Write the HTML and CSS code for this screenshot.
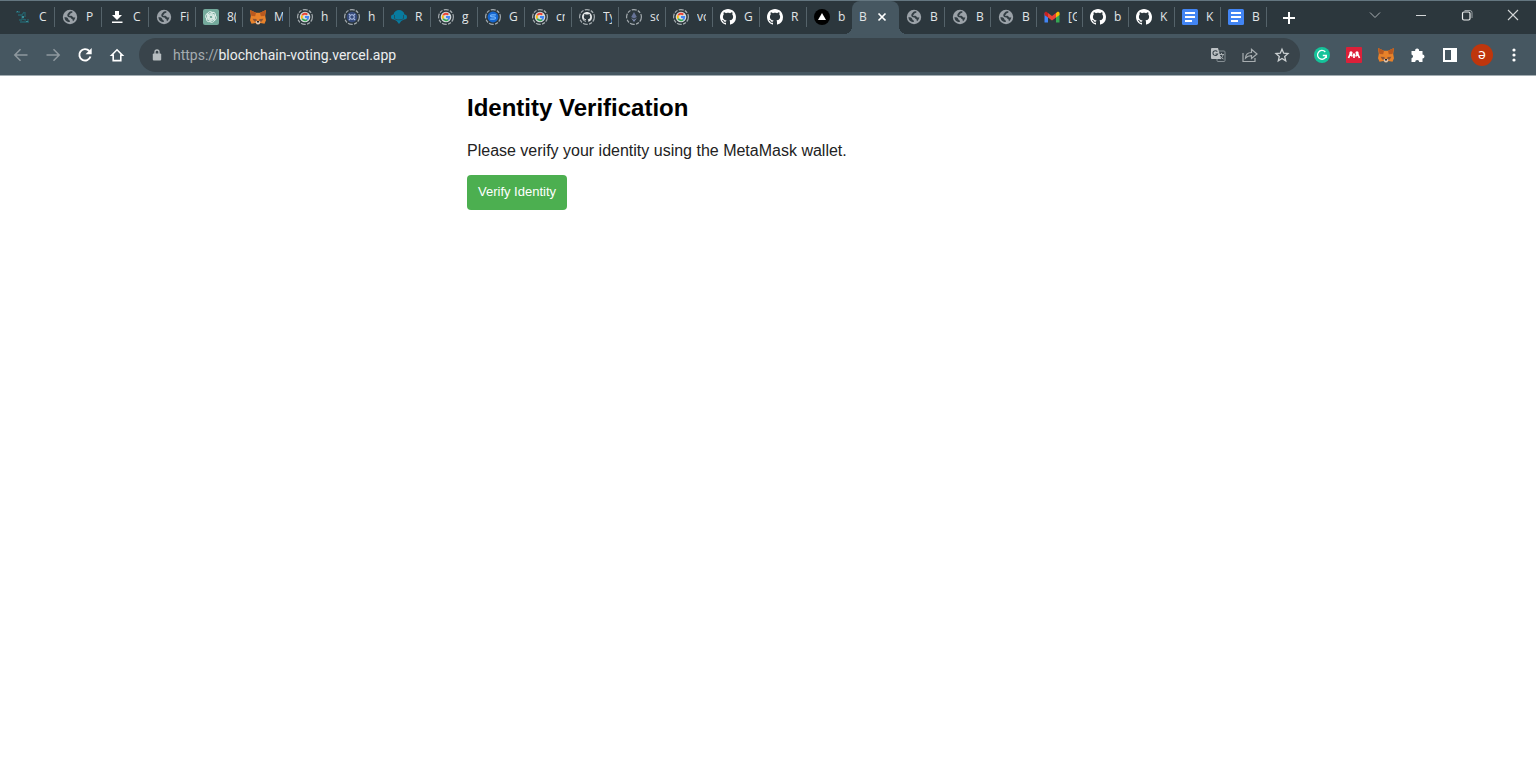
FILE: index.html
```html
<!DOCTYPE html>
<html lang="en">
<head>
<meta charset="utf-8">
<meta name="viewport" content="width=device-width, initial-scale=1">
<title>Identity Verification</title>
<link rel="stylesheet" href="styles.css">
</head>
<body>
<svg class="sprite" aria-hidden="true">
  <symbol id="globe" viewBox="0 0 16 16"><circle cx="8" cy="8" r="7.200" fill="#9ba2a8"/><path d="M2.500 8c1 .2 2.300 .2 3.200 1 .8.800.5 1.900 1.500 2.200 1 .3.800 1 .5 1.900C4.800 13 2.300 11 2.500 8zM7 3.200c1-1 2.500-1 3.600-.5-.2 1-.8 1.300-1.800 1.600-.7.3-.5 1.200-1.300 1.400-.8.300-.3 1.300.5 1.200 1.200-.2 2.200 0 2.600.9.400.9 1.500.600 2.700.400-.3 1.800-1 3-2.300 4-.5-.8-.2-1.900-1-2.200-1.200-.3-.6-1.500-1.900-1.600C6.500 8.200 5 7.400 5.300 6c.2-1.200 1-1.700 1.700-2.800z" fill="#333e44"/></symbol>
  <symbol id="github" viewBox="0 0 16 16"><path fill="currentColor" d="M8 0C3.580 0 0 3.580 0 8c0 3.540 2.290 6.530 5.470 7.590.4.070.55-.17.55-.38 0-.19-.01-.82-.01-1.490-2.010.37-2.530-.49-2.690-.94-.09-.23-.48-.94-.82-1.130-.28-.15-.68-.52-.01-.53.63-.01 1.080.58 1.230.82.720 1.210 1.870.87 2.330.66.070-.52.280-.87.510-1.070-1.780-.2-3.640-.89-3.640-3.950 0-.87.310-1.590.820-2.150-.08-.2-.36-1.020.08-2.120 0 0 .67-.21 2.200.820.640-.18 1.320-.27 2-.27s1.360.09 2 .27c1.530-1.040 2.200-.82 2.200-.82.440 1.100.160 1.920.080 2.120.51.560.820 1.270.820 2.150 0 3.070-1.870 3.750-3.650 3.950.29.250.540.730.540 1.480 0 1.070-.01 1.930-.01 2.200 0 .21.150.460.550.38A8.010 8.010 0 0 0 16 8c0-4.420-3.580-8-8-8z"/></symbol>
  <symbol id="ring" viewBox="0 0 16 16"><circle cx="8" cy="8" r="7.400" fill="none" stroke="#a3aaae" stroke-width="1.200" stroke-dasharray="5 1.200 3.200 1.400"/></symbol>
  <symbol id="google" viewBox="0 0 16 16"><use href="#ring"/><circle cx="8" cy="8" r="5.300" fill="#d5d9da"/><g fill="none" stroke-width="1.800"><path d="M5.200 6.400A3.200 3.200 0 0 1 10.300 5.700" stroke="#ea4335"/><path d="M5.200 6.400a3.200 3.200 0 0 0 0 3.200" stroke="#fbbc05"/><path d="M5.200 9.600a3.200 3.200 0 0 0 4.800 1" stroke="#34a853"/><path d="M8 8h3.200c0 1.200-.5 2.100-1.200 2.600" stroke="#4285f4"/></g></symbol>
  <symbol id="fox" viewBox="0 0 16 16"><path d="M0 1l6 2.800h4L16 1l-.8 6 .8 4.200-1.500 3.600-4-.9-1.300 1.300H6.800L5.500 13.900l-4 .9L0 11.200.8 7z" fill="#e8822a"/><path d="M0 1l6 2.800-.8 3.400L1.500 7zM16 1l-6 2.800.8 3.400L14.500 7z" fill="#b9591f"/><path d="M2.500 9.800l4 .1.300 3-2.500-.4zM13.500 9.800l-4 .1-.3 3 2.500-.4z" fill="#8d5636"/><path d="M5.500 12.700l1.300-.6h2.400l1.300.6-1.300 2.500H6.800z" fill="#d9c9bd"/><path d="M7 12h2v1.600H7z" fill="#2a2522"/></symbol>
  <symbol id="docs" viewBox="0 0 16 16"><rect width="16" height="16" rx="1.500" fill="#4285f4"/><path d="M3 4h10M3 8h10M3 12h7" stroke="#fff" stroke-width="1.800"/></symbol>
</svg>

<header class="browser">
  <div class="strip">
    <nav class="tabs" aria-label="Open tabs">
      <button class="tab"><svg viewBox="0 0 16 16"><path d="M1 3h4M3 6h4l2-3M7 6v4l4 1M10 3v5M4 11h3M5 13h9M13 10v3" fill="none" stroke="#24616b" stroke-width="1.300"/><path d="M7 7h2v2H7zM2 2h1v1H2zM11 12h2v1h-2z" fill="#3a8c96"/></svg><span>C</span></button>
      <button class="tab"><svg><use href="#globe"/></svg><span>P</span></button>
      <button class="tab"><svg viewBox="0 0 16 16"><path d="M6 2h4v4h3l-5 5-5-5h3zM3 12.500h10.500V14H3z" fill="#fff"/></svg><span>C</span></button>
      <button class="tab"><svg><use href="#globe"/></svg><span>Fi</span></button>
      <button class="tab"><svg viewBox="0 0 16 16"><rect width="16" height="16" rx="2" fill="#74aa9c"/><g fill="none" stroke="#e4f1ed" stroke-width=".9"><path id="petal" d="M4.500 8.800V5.300a2.800 2.800 0 0 1 5-1.600M6.300 9V6l3-1.700"/><use href="#petal" transform="rotate(60 8 8)"/><use href="#petal" transform="rotate(120 8 8)"/><use href="#petal" transform="rotate(180 8 8)"/><use href="#petal" transform="rotate(240 8 8)"/><use href="#petal" transform="rotate(300 8 8)"/></g></svg><span>8(</span></button>
      <button class="tab"><svg><use href="#fox"/></svg><span>M</span></button>
      <button class="tab"><svg><use href="#google"/></svg><span>h</span></button>
      <button class="tab"><svg viewBox="0 0 16 16"><use href="#ring"/><circle cx="8" cy="8" r="5.300" fill="#354a7b"/><path d="M4.800 4.800l6.400 6.400M11.200 4.800l-6.400 6.400" stroke="#a9bce7" stroke-width="1.100"/><circle cx="8" cy="8" r="2.300" fill="#354a7b" stroke="#b9c9ec"/></svg><span>h</span></button>
      <button class="tab"><svg viewBox="0 0 16 16"><path d="M2.500 5.500C3 2.500 5.500 1 8 1s5 1.500 5.500 4.500c1.500 0 2.500.8 2.500 2.500s-1 2.500-3 2.500L10.300 12 8 15l-2.300-3L3 10.500C1 10.500 0 9.700 0 8s1-2.500 2.500-2.500z" fill="#087b9f"/><path d="M3.500 6v3.500c1 1.500 7 2 9 0V6" fill="none" stroke="#2b4652" stroke-width=".8"/></svg><span>R</span></button>
      <button class="tab"><svg><use href="#google"/></svg><span>g</span></button>
      <button class="tab"><svg viewBox="0 0 16 16"><use href="#ring"/><circle cx="8" cy="8" r="5.400" fill="#1566cf"/><path d="M10.800 5.800H7c-2 0-2 2 0 2.100h2c2 .1 2 2.300 0 2.300H5.200" fill="none" stroke="#72b6ff" stroke-width="1.200"/></svg><span>G</span></button>
      <button class="tab"><svg><use href="#google"/></svg><span>cr</span></button>
      <button class="tab"><svg viewBox="0 0 16 16"><use href="#ring"/><use href="#github" x="3" y="3" width="10" height="10" color="#e4e7e8"/></svg><span>Ty</span></button>
      <button class="tab"><svg viewBox="0 0 16 16"><use href="#ring"/><path d="M8 3l2.800 4.900L8 9.600 5.200 7.900z" fill="#667397"/><path d="M5.200 9L8 10.700 10.800 9 8 13z" fill="#8490b4"/></svg><span>so</span></button>
      <button class="tab"><svg><use href="#google"/></svg><span>vo</span></button>
      <button class="tab"><svg><use href="#github"/></svg><span>G</span></button>
      <button class="tab"><svg><use href="#github"/></svg><span>R</span></button>
      <button class="tab tab-before"><svg viewBox="0 0 16 16"><circle cx="8" cy="8" r="8" fill="#000"/><path d="M8 4l4 7H4z" fill="#fff"/></svg><span>b</span></button>
      <button class="tab tab-active" aria-current="page"><span>B</span><svg viewBox="0 0 16 16"><path d="M4.500 4.500l7 7M11.500 4.500l-7 7" stroke="#fff" stroke-width="1.700"/></svg></button>
      <button class="tab tab-small"><svg><use href="#globe"/></svg><span>B</span></button>
      <button class="tab tab-small"><svg><use href="#globe"/></svg><span>B</span></button>
      <button class="tab tab-small"><svg><use href="#globe"/></svg><span>B</span></button>
      <button class="tab tab-small"><svg viewBox="0 0 16 16"><path d="M.5 4v9.500H4V7z" fill="#4285f4"/><path d="M15.500 4v9.500H12V7z" fill="#34a853"/><path d="M12 4l2-1.500 1.500.9V6L12 8.500z" fill="#fbbc04"/><path d="M4 4L2 2.500.5 3.500V6L4 8.500z" fill="#c5221f"/><path d="M4 4l4 3 4-3v4.500l-4 3-4-3z" fill="#ea4335"/></svg><span>[G</span></button>
      <button class="tab tab-small"><svg><use href="#github"/></svg><span>b</span></button>
      <button class="tab tab-small"><svg><use href="#github"/></svg><span>K</span></button>
      <button class="tab tab-small"><svg><use href="#docs"/></svg><span>K</span></button>
      <button class="tab tab-small"><svg><use href="#docs"/></svg><span>B</span></button>
    </nav>
    <button class="new-tab" aria-label="New tab"><svg viewBox="0 0 16 16"><path d="M8 2v12M2 8h12" stroke="#fff" stroke-width="2"/></svg></button>
    <div class="window-controls">
      <button aria-label="Search tabs"><svg viewBox="0 0 16 16"><path d="M3 5.500l5 5 5-5" stroke="#aab0b3"/></svg></button>
      <button aria-label="Minimize"><svg viewBox="0 0 16 16"><path d="M3 8.500h10" stroke="#d4d7d8"/></svg></button>
      <button aria-label="Restore"><svg viewBox="0 0 16 16"><rect x="3.500" y="5" width="7.500" height="8" rx="1.500" stroke="#eef0f0" stroke-width="1.200"/><path d="M5.500 3.500H11a2 2 0 0 1 2 2V11" stroke="#9aa1a5"/></svg></button>
      <button aria-label="Close"><svg viewBox="0 0 16 16"><path d="M3 3l10 10M13 3L3 13" stroke="#d4d7d8" stroke-width="1.100"/></svg></button>
    </div>
  </div>

  <div class="toolbar">
    <div class="tools">
      <button aria-label="Back"><svg viewBox="0 0 16 16"><path d="M14.500 8H2M7.500 2.300L1.800 8l5.700 5.700" fill="none" stroke="#8f999f" stroke-width="1.500"/></svg></button>
      <button aria-label="Forward"><svg viewBox="0 0 16 16"><path d="M1.500 8H14M8.500 2.300L14.200 8l-5.700 5.700" fill="none" stroke="#8f999f" stroke-width="1.500"/></svg></button>
      <button aria-label="Reload"><svg viewBox="0 0 16 16"><path d="M13.500 9.500A5.700 5.700 0 1 1 12.300 4" fill="none" stroke="#fff" stroke-width="1.900"/><path d="M14.700 1v6.200H8.500z" fill="#fff"/></svg></button>
      <button aria-label="Home"><svg viewBox="0 0 16 16"><path d="M2.600 8.200L8 2.800l5.400 5.400h-1.600v5.400H4.200V8.200z" fill="none" stroke="#fff" stroke-width="1.600"/></svg></button>
    </div>
    <div class="omnibox">
      <svg class="lock" viewBox="0 0 16 16"><rect x="3.800" y="6.500" width="8.400" height="7" rx="1" fill="#b7bdc0"/><path d="M6 7V5a2 2 0 0 1 4 0v2" fill="none" stroke="#b7bdc0" stroke-width="1.300"/></svg>
      <label for="address">https://</label>
      <input id="address" type="text" value="blochchain-voting.vercel.app" spellcheck="false">
      <div class="tools">
        <button aria-label="Translate"><svg viewBox="0 0 16 16"><rect x="7" y="4" width="8" height="10.500" rx="1" fill="none" stroke="#858e93"/><path d="M9 7.500h5M11.500 6v1.500M13 8c-.5 2-1.500 3-3 4M10 9c1 1.500 2 2.500 3.500 3" fill="none" stroke="#a7adb0"/><path d="M2 1h6l3 11H2a1 1 0 0 1-1-1V2a1 1 0 0 1 1-1z" fill="#bcc1c4"/><path d="M7.300 4.700A2.400 2.400 0 1 0 7.600 7H5.400" fill="none" stroke="#39444b" stroke-width="1.100"/></svg></button>
        <button aria-label="Share"><svg viewBox="0 0 16 16"><path d="M1 6v8.500h12V11M3.500 11c.3-4 2.500-5.500 6-5.500V2.300l5.500 4.700-5.500 4.500V8.600C6.500 8.600 5 9.300 3.500 11z" fill="none" stroke="#a7adb0" stroke-width="1.200"/></svg></button>
        <button aria-label="Bookmark"><svg viewBox="0 0 16 16"><path d="M8 2.200l1.700 4 4.300.4-3.300 2.900 1 4.300L8 11.500l-3.700 2.300 1-4.300L2 6.600l4.300-.4z" fill="none" stroke="#cbd0d2" stroke-width="1.300"/></svg></button>
      </div>
    </div>
    <div class="tools">
      <button aria-label="Grammarly"><svg viewBox="0 0 16 16"><circle cx="8" cy="8" r="8" fill="#15c39a"/><path d="M11.300 5A4.400 4.400 0 1 0 12.300 8.500H8.800M12.300 8.300v2.800" fill="none" stroke="#fff" stroke-width="1.300"/></svg></button>
      <button aria-label="Mendeley"><svg viewBox="0 0 16 16"><rect width="16" height="16" rx="1" fill="#dc2039"/><path d="M2.500 11L4.500 6.500M8 6.500V11M11.500 6.500l2 4.500M4.500 6L6.200 9.500M11.500 6L9.800 9.500" stroke="#fff" stroke-width="1.700"/><circle cx="5" cy="5.800" r="1.600" fill="#fff"/><circle cx="11" cy="5.800" r="1.600" fill="#fff"/><circle cx="8" cy="8" r="1.300" fill="#fff"/></svg></button>
      <button aria-label="MetaMask"><svg><use href="#fox"/></svg></button>
      <button aria-label="Extensions"><svg viewBox="0 0 16 16"><path d="M1.500 4h3.700a2 2 0 1 1 3.800 0h3.500v3.500a2 2 0 1 1 0 4V15H9.200a2 2 0 0 0-4 0H1.500v-3.700a2 2 0 0 0 0-3.900z" fill="#fff"/></svg></button>
      <button aria-label="Side panel"><svg viewBox="0 0 16 16"><path d="M1 1h14v14H1zM3 3v10h6V3z" fill="#fff" fill-rule="evenodd"/></svg></button>
      <button aria-label="Profile"><span class="avatar">ə</span></button>
      <button aria-label="Menu"><svg viewBox="0 0 16 16" fill="#fff"><circle cx="8" cy="3" r="1.600"/><circle cx="8" cy="8" r="1.600"/><circle cx="8" cy="13" r="1.600"/></svg></button>
    </div>
  </div>
</header>

<main class="page">
  <h2>Identity Verification</h2>
  <p>Please verify your identity using the MetaMask wallet.</p>
  <button class="verify">Verify Identity</button>
</main>
</body>
</html>
```
FILE: styles.css
```css
* { box-sizing: border-box; }

body {
  margin: 0;
  background: #fff;
  color: #000;
  font-family: "Liberation Sans", Arial, sans-serif;
}

button {
  padding: 0;
  border: 0;
  background: none;
  color: inherit;
  font: inherit;
}

svg {
  flex: none;
  width: 16px;
  height: 16px;
}

.sprite {
  position: absolute;
  width: 0;
  height: 0;
}

.browser {
  border-bottom: 1px solid #a3adb2;
  background: #465761;
  color: #e1e5e7;
  font-family: "Open Sans", "Noto Sans", sans-serif;
}

.strip {
  display: flex;
  height: 34px;
  padding-left: 8px;
  border-top: 1px solid #647680;
  background: #2c373d;
}

.tabs { display: flex; }

.tab {
  display: flex;
  align-items: center;
  gap: 8px;
  width: 47px;
  padding: 0 0 1px 7px;
  background: linear-gradient(#55636a, #55636a) right 6px / 1px 20px no-repeat;
  font-size: 12px;
  line-height: 16px;
  text-align: left;
}

.tab svg { color: #fff; }

.tab span {
  width: 9px;
  overflow: hidden;
  white-space: nowrap;
}

.tab-small { width: 46px; }

.tab-before {
  width: 45px;
  background: none;
}

.tab-active {
  position: relative;
  gap: 6px;
  border-radius: 8px 8px 0 0;
  background: #465761;
}

.tab-active::before,
.tab-active::after {
  content: "";
  position: absolute;
  bottom: 0;
  width: 8px;
  height: 8px;
}

.tab-active::before {
  right: 100%;
  background: radial-gradient(circle at 0 0, transparent 8px, #465761 8px);
}

.tab-active::after {
  left: 100%;
  background: radial-gradient(circle at 100% 0, transparent 8px, #465761 8px);
}

.new-tab {
  display: grid;
  place-items: center;
  width: 28px;
  margin-left: 8px;
}

.window-controls {
  display: flex;
  height: 28px;
  margin-left: auto;
}

.window-controls button {
  display: grid;
  place-items: center;
  width: 46px;
}

.window-controls svg { fill: none; }

.toolbar {
  display: flex;
  align-items: center;
  gap: 6px;
  height: 41px;
  padding: 0 6px 0 5px;
}

.tools { display: flex; }

.tools button {
  display: grid;
  place-items: center;
  width: 32px;
  height: 32px;
}

.omnibox {
  display: flex;
  flex: 1;
  align-items: center;
  height: 34px;
  padding: 0 2px 0 10px;
  border-radius: 17px;
  background: #39444b;
  font-family: Roboto, "Open Sans", sans-serif;
  font-size: 14px;
}

.omnibox label {
  margin-left: 8px;
  color: #a5acb0;
}

.omnibox input {
  flex: 1;
  min-width: 0;
  padding: 0;
  border: 0;
  outline: 0;
  background: none;
  color: #eceeef;
  font: inherit;
}

.avatar {
  width: 22px;
  height: 22px;
  border-radius: 50%;
  background: #bf360c;
  color: #fff;
  font-size: 14px;
  line-height: 20px;
}

.page {
  max-width: 602px;
  margin: 0 auto;
}

.page h2 {
  margin: 18px 0 20px;
  font-size: 24px;
  line-height: 28px;
}

.page p {
  margin: 0 0 15px;
  color: #222;
  font-size: 16px;
  line-height: 18px;
}

.verify {
  padding: 9px 11px 11px;
  border-radius: 4px;
  background: #4caf50;
  color: #fff;
  font-size: 13px;
  line-height: 15px;
}
```
